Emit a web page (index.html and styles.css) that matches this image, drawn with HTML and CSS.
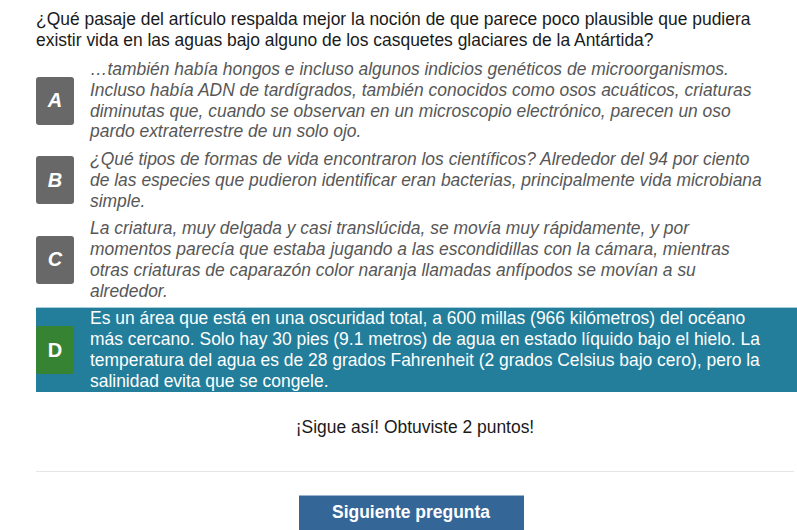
FILE: index.html
```html
<!DOCTYPE html>
<html lang="es">
<head>
<meta charset="utf-8">
<link rel="stylesheet" href="styles.css">
</head>
<body>
<div class="quiz">
  <p class="question">¿Qué pasaje del artículo respalda mejor la noción de que parece poco plausible que pudiera existir vida en las aguas bajo alguno de los casquetes glaciares de la Antártida?</p>
  <div class="options">
    <div class="option">
      <div class="letter">A</div>
      <div class="text">…también había hongos e incluso algunos indicios genéticos de microorganismos. Incluso había ADN de tardígrados, también conocidos como osos acuáticos, criaturas diminutas que, cuando se observan en un microscopio electrónico, parecen un oso pardo extraterrestre de un solo ojo.</div>
    </div>
    <div class="option">
      <div class="letter">B</div>
      <div class="text">¿Qué tipos de formas de vida encontraron los científicos? Alrededor del 94 por ciento de las especies que pudieron identificar eran bacterias, principalmente vida microbiana simple.</div>
    </div>
    <div class="option">
      <div class="letter">C</div>
      <div class="text">La criatura, muy delgada y casi translúcida, se movía muy rápidamente, y por momentos parecía que estaba jugando a las escondidillas con la cámara, mientras otras criaturas de caparazón color naranja llamadas anfípodos se movían a su alrededor.</div>
    </div>
    <div class="option correct">
      <div class="letter">D</div>
      <div class="text">Es un área que está en una oscuridad total, a 600 millas (966 kilómetros) del océano más cercano. Solo hay 30 pies (9.1 metros) de agua en estado líquido bajo el hielo. La temperatura del agua es de 28 grados Fahrenheit (2 grados Celsius bajo cero), pero la salinidad evita que se congele.</div>
    </div>
  </div>
  <p class="feedback">¡Sigue así! Obtuviste 2 puntos!</p>
  <hr class="sep">
  <div class="actions">
    <button class="next">Siguiente pregunta</button>
  </div>
</div>
</body>
</html>
```
FILE: styles.css
```css
html, body {
  margin: 0;
  padding: 0;
  background: #fff;
  overflow: hidden;
}
body {
  font-family: "Liberation Sans", Arial, sans-serif;
  font-size: 17.45px;
  color: #1a1a1a;
}
.quiz {
  padding: 9px 0 0 36px;
}
.question {
  margin: 0 0 8px;
  line-height: 21px;
  padding-right: 30px;
  color: #1a1a1a;
}
.options {
  display: flex;
  flex-direction: column;
  gap: 7px;
}
.option {
  display: flex;
  align-items: center;
  gap: 16px;
}
.letter {
  flex: 0 0 38px;
  height: 48px;
  border-radius: 3px;
  background: #686868;
  color: #fff;
  font-weight: bold;
  font-style: italic;
  font-size: 20px;
  display: flex;
  align-items: center;
  justify-content: center;
}
.text {
  font-style: italic;
  color: #575757;
  line-height: 20.75px;
  padding-right: 29px;
}
.option.correct {
  background: #227e9a;
  border-top: 1px solid #a9d0db;
  margin-top: -1px;
}
.option.correct .letter {
  background: #368433;
  font-style: normal;
  border-radius: 2px;
}
.option.correct .text {
  font-style: normal;
  color: #fff;
  line-height: 21px;
}
.feedback {
  margin: 25px 0 0;
  padding-right: 3px;
  text-align: center;
  line-height: 21px;
  color: #1a1a1a;
}
.sep {
  margin: 33px 3px 0 0;
  border: 0;
  border-top: 1px solid #e6e6e6;
  height: 0;
}
.actions {
  display: flex;
  justify-content: center;
  padding-right: 11px;
  margin-top: 23px;
}
.next {
  width: 225px;
  height: 36px;
  border: 0;
  border-top: 1px solid #9ab4cf;
  background: #346798;
  color: #fff;
  font-family: "Liberation Sans", Arial, sans-serif;
  font-size: 17.45px;
  font-weight: bold;
  padding: 0 0 2px;
}
```
